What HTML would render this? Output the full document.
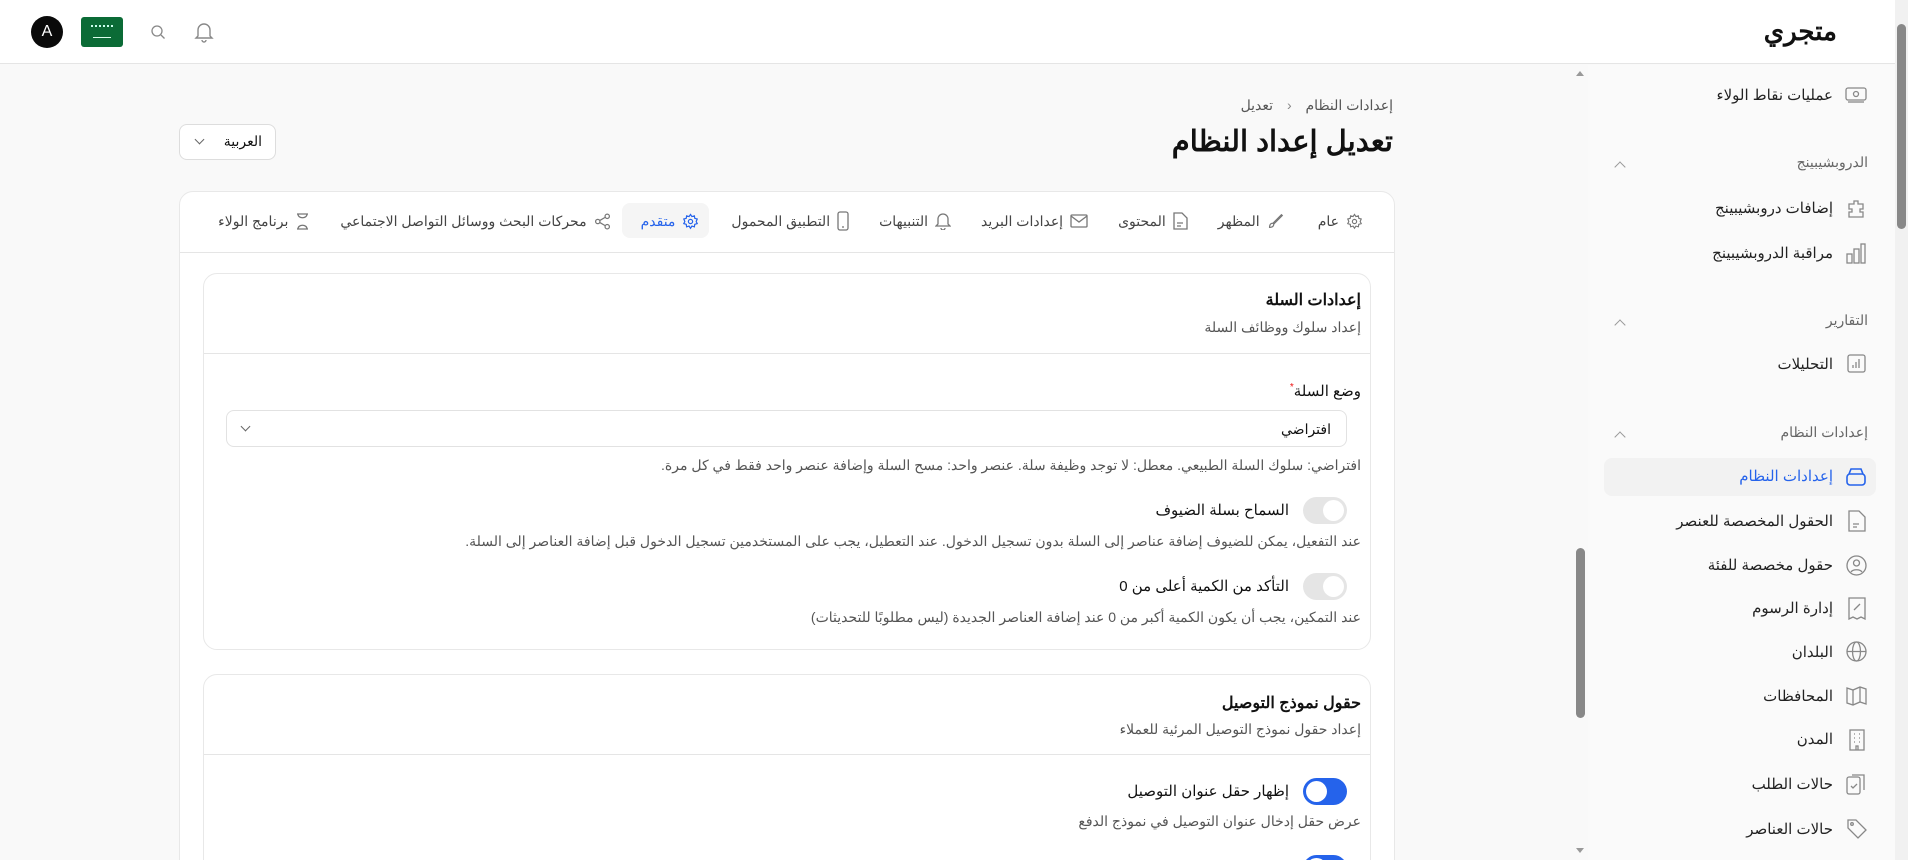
<!DOCTYPE html>
<html lang="ar"><head><meta charset="utf-8">
<style>
*{box-sizing:border-box;margin:0;padding:0}
html,body{width:1908px;height:860px;overflow:hidden}
body{background:#f9f9f9;font-family:"Liberation Sans","Noto Sans CJK SC",sans-serif;color:#111}
#wrap{position:relative;width:1908px;height:860px;overflow:hidden}
.abs{position:absolute}
.hdr{left:0;top:0;width:1895px;height:64px;background:#fff;border-bottom:1px solid #e5e5e5}
.rt{direction:rtl;text-align:right;white-space:nowrap}
.sb{left:1588px;top:65px;width:307px;height:795px;background:#fafafa}
.pscroll{left:1895px;top:0;width:13px;height:860px;background:#f1f1f1}
.mscroll{left:1573px;top:65px;width:15px;height:795px;background:#f9f9f9}
.si{right:42px;font-size:15px;color:#222}
.sh{right:40px;font-size:14px;color:#666}
.card{background:#fff;border:1px solid #e8e8e8;border-radius:14px}
.tog{width:44px;height:27px;border-radius:14px;background:#e5e5e5;position:absolute}
.tog::after{content:"";position:absolute;right:3px;top:3px;width:21px;height:21px;border-radius:50%;background:#fff}
.tog.on{background:#2563eb}
.tog.on::after{right:auto;left:3px}
.help{font-size:14px;color:#555}
.lbl{font-size:15px;color:#111}
.tab{font-size:14px;color:#444;display:flex;align-items:center;gap:7px}
</style></head><body><div id="wrap">
<div class="abs hdr"></div>
<div class="abs rt" style="right:71px;top:16px;font-size:26px;font-weight:bold">متجري</div>
<div class="abs" style="left:31px;top:16px;width:32px;height:32px;border-radius:50%;background:#0a0a0a;color:#fff;font-size:16px;text-align:center;line-height:32px">A</div>
<div class="abs" style="left:81px;top:17px;width:42px;height:30px;border-radius:3px;background:#0b6b36"><div class="abs" style="left:10px;top:8px;width:22px;height:4px;border-top:2px dotted #cfe"></div><div class="abs" style="left:12px;top:20px;width:18px;height:1px;background:#dfe"></div></div>
<svg class="abs" style="left:150px;top:24px" width="16" height="16" viewBox="0 0 16 16" fill="none" stroke="#888" stroke-width="1.3"><circle cx="7" cy="7" r="5"/><path d="M11 11l3.5 3.5"/></svg>
<svg class="abs" style="left:194px;top:21px" width="20" height="22" viewBox="0 0 20 22" fill="none" stroke="#888" stroke-width="1.4"><path d="M4 15V9a6 6 0 0112 0v6l2 2H2z"/><path d="M8 19a2 2 0 004 0"/></svg>

<div class="abs rt" style="right:515px;top:97px;font-size:14px;color:#555">إعدادات النظام <span style="margin:0 10px;color:#888">&lsaquo;</span> تعديل</div>
<div class="abs rt" style="right:515px;top:124px;font-size:29px;font-weight:bold">تعديل إعداد النظام</div>
<div class="abs" style="left:179px;top:124px;width:97px;height:36px;background:#fff;border:1px solid #ddd;border-radius:8px"><span class="abs rt" style="right:13px;top:8px;font-size:14px">العربية</span><div class="abs" style="left:16px;top:11px;width:7px;height:7px;border-right:1.5px solid #666;border-bottom:1.5px solid #666;transform:rotate(45deg)"></div></div>

<div class="abs card" style="left:179px;top:191px;width:1216px;height:700px"></div>
<div class="abs" style="left:180px;top:252px;width:1214px;height:1px;background:#e5e5e5"></div>
<div class="abs" style="left:622px;top:203px;width:87px;height:35px;border-radius:8px;background:#f5f5f5"></div>
<div class="abs" style="right:545px;top:211px;display:flex;direction:rtl;gap:0;white-space:nowrap">
<div class="tab" style="margin-left:34px"><svg width="17" height="17" viewBox="0 0 24 24" fill="none" stroke="#777" stroke-width="1.6"><circle cx="12" cy="12" r="3"/><path d="M12 2l2 3 3.5-1 .5 3.5 3.5 1-1.5 3.5 1.5 3-3.5 1-.5 3.5-3.5-1-2 3-2-3-3.5 1-.5-3.5-3.5-1 1.5-3-1.5-3.5 3.5-1 .5-3.5 3.5 1z"/></svg>عام</div>
<div class="tab" style="margin-left:30px"><svg width="17" height="17" viewBox="0 0 20 20" fill="none" stroke="#777" stroke-width="1.4"><path d="M17 2L7 12l1 1L18 3z"/><path d="M7 12c-3 0-4 2-4 5 3 0 5-1 5-4"/></svg>المظهر</div>
<div class="tab" style="margin-left:30px"><svg width="15" height="18" viewBox="0 0 15 18" fill="none" stroke="#777" stroke-width="1.3"><path d="M1 1h8l5 5v11H1z"/><path d="M4 11h6M4 14h4"/></svg>المحتوى</div>
<div class="tab" style="margin-left:30px"><svg width="18" height="14" viewBox="0 0 18 14" fill="none" stroke="#777" stroke-width="1.3"><rect x="1" y="1" width="16" height="12" rx="1"/><path d="M1 2l8 6 8-6"/></svg>إعدادات البريد</div>
<div class="tab" style="margin-left:30px"><svg width="16" height="18" viewBox="0 0 16 18" fill="none" stroke="#777" stroke-width="1.3"><path d="M3 12V7a5 5 0 0110 0v5l2 2H1z"/><path d="M6 16a2 2 0 004 0"/></svg>التنبيهات</div>
<div class="tab" style="margin-left:32px"><svg width="12" height="20" viewBox="0 0 12 20" fill="none" stroke="#777" stroke-width="1.3"><rect x="1" y="1" width="10" height="18" rx="2"/><path d="M5 16h2"/></svg>التطبيق المحمول</div>
<div class="tab" style="margin-left:30px;color:#2563eb"><svg width="17" height="17" viewBox="0 0 24 24" fill="none" stroke="#2563eb" stroke-width="1.7"><circle cx="12" cy="12" r="3"/><path d="M12 2l2 3 3.5-1 .5 3.5 3.5 1-1.5 3.5 1.5 3-3.5 1-.5 3.5-3.5-1-2 3-2-3-3.5 1-.5-3.5-3.5-1 1.5-3-1.5-3.5 3.5-1 .5-3.5 3.5 1z"/></svg>متقدم</div>
<div class="tab" style="margin-left:30px"><svg width="17" height="17" viewBox="0 0 18 18" fill="none" stroke="#777" stroke-width="1.3"><circle cx="14" cy="3.5" r="2.3"/><circle cx="4" cy="9" r="2.3"/><circle cx="14" cy="14.5" r="2.3"/><path d="M6 8l6-3.5M6 10l6 3.5"/></svg>محركات البحث ووسائل التواصل الاجتماعي</div>
<div class="tab"><svg width="15" height="17" viewBox="0 0 15 17" fill="none" stroke="#777" stroke-width="1.3"><path d="M2 1h11M2 16h11M3 1c0 5 9 5 9 0M3 16c0-5 9-5 9 0"/></svg>برنامج الولاء</div>
</div>

<div class="abs card" style="left:203px;top:273px;width:1168px;height:377px"></div>
<div class="abs" style="left:204px;top:353px;width:1166px;height:1px;background:#e5e5e5"></div>
<div class="abs rt" style="right:547px;top:290px;font-size:16px;font-weight:bold">إعدادات السلة</div>
<div class="abs rt help" style="right:547px;top:319px">إعداد سلوك ووظائف السلة</div>
<div class="abs rt lbl" style="right:547px;top:382px">وضع السلة<span style="color:#e11;font-size:10px;vertical-align:top">*</span></div>
<div class="abs" style="left:226px;top:410px;width:1121px;height:37px;background:#fff;border:1px solid #e2e2e2;border-radius:8px"><span class="abs rt" style="right:15px;top:10px;font-size:14px">افتراضي</span><div class="abs" style="left:15px;top:12px;width:7px;height:7px;border-right:1.3px solid #666;border-bottom:1.3px solid #666;transform:rotate(45deg)"></div></div>
<div class="abs rt help" style="right:547px;top:457px">افتراضي: سلوك السلة الطبيعي. معطل: لا توجد وظيفة سلة. عنصر واحد: مسح السلة وإضافة عنصر واحد فقط في كل مرة.</div>
<div class="tog" style="left:1303px;top:497px"></div>
<div class="abs rt lbl" style="right:619px;top:501px">السماح بسلة الضيوف</div>
<div class="abs rt help" style="right:547px;top:533px">عند التفعيل، يمكن للضيوف إضافة عناصر إلى السلة بدون تسجيل الدخول. عند التعطيل، يجب على المستخدمين تسجيل الدخول قبل إضافة العناصر إلى السلة.</div>
<div class="tog" style="left:1303px;top:573px"></div>
<div class="abs rt lbl" style="right:619px;top:577px">التأكد من الكمية أعلى من 0</div>
<div class="abs rt help" style="right:547px;top:609px">عند التمكين، يجب أن يكون الكمية أكبر من 0 عند إضافة العناصر الجديدة (ليس مطلوبًا للتحديثات)</div>

<div class="abs card" style="left:203px;top:674px;width:1168px;height:300px"></div>
<div class="abs" style="left:204px;top:754px;width:1166px;height:1px;background:#e5e5e5"></div>
<div class="abs rt" style="right:547px;top:693px;font-size:16px;font-weight:bold">حقول نموذج التوصيل</div>
<div class="abs rt help" style="right:547px;top:721px">إعداد حقول نموذج التوصيل المرئية للعملاء</div>
<div class="tog on" style="left:1303px;top:778px"></div>
<div class="abs rt lbl" style="right:619px;top:782px">إظهار حقل عنوان التوصيل</div>
<div class="abs rt help" style="right:547px;top:813px">عرض حقل إدخال عنوان التوصيل في نموذج الدفع</div>
<div class="tog on" style="left:1303px;top:855px"></div>

<div class="abs mscroll"><div class="abs" style="left:3px;top:6px;border:4px solid transparent;border-bottom:5px solid #999;border-top:none"></div><div class="abs" style="left:3px;top:483px;width:9px;height:170px;border-radius:5px;background:#888"></div><div class="abs" style="left:3px;top:783px;border:4px solid transparent;border-top:5px solid #999;border-bottom:none"></div></div>
<div class="abs sb"></div>
<div class="abs pscroll"><div class="abs" style="left:2px;top:24px;width:9px;height:205px;border-radius:5px;background:#888"></div></div>

<div class="abs rt si" style="top:86px;right:75px">عمليات نقاط الولاء</div>
<svg class="abs" style="left:1845px;top:86px" width="22" height="18" viewBox="0 0 22 18" fill="none" stroke="#888" stroke-width="1.3"><rect x="1" y="2" width="20" height="12" rx="2"/><circle cx="11" cy="8" r="2.5"/><path d="M3 16h16"/></svg>
<div class="abs rt sh" style="top:154px;right:40px">الدروبشيبينج</div>
<div class="abs" style="left:1616px;top:163px;width:8px;height:8px;border-left:1.3px solid #999;border-top:1.3px solid #999;transform:rotate(45deg)"></div>
<div class="abs rt si" style="top:199px;right:75px">إضافات دروبشيبينج</div>
<svg class="abs" style="left:1846px;top:199px" width="20" height="20" viewBox="0 0 20 20" fill="none" stroke="#888" stroke-width="1.3"><path d="M8 2h4v3h5v5h-3v3h3v5H3v-5h3v-3H3V5h5z"/></svg>
<div class="abs rt si" style="top:244px;right:75px">مراقبة الدروبشيبينج</div>
<svg class="abs" style="left:1846px;top:242px" width="20" height="22" viewBox="0 0 20 22" fill="none" stroke="#888" stroke-width="1.3"><rect x="1" y="12" width="5" height="9"/><rect x="8" y="7" width="5" height="14"/><rect x="15" y="2" width="4" height="19"/></svg>
<div class="abs rt sh" style="top:312px">التقارير</div>
<div class="abs" style="left:1616px;top:321px;width:8px;height:8px;border-left:1.3px solid #999;border-top:1.3px solid #999;transform:rotate(45deg)"></div>
<div class="abs rt si" style="top:355px;right:75px">التحليلات</div>
<svg class="abs" style="left:1847px;top:354px" width="19" height="19" viewBox="0 0 19 19" fill="none" stroke="#888" stroke-width="1.3"><rect x="1" y="1" width="17" height="17" rx="2"/><path d="M6 14v-3M9 14V8M12 14V5"/></svg>
<div class="abs rt sh" style="top:424px">إعدادات النظام</div>
<div class="abs" style="left:1616px;top:433px;width:8px;height:8px;border-left:1.3px solid #999;border-top:1.3px solid #999;transform:rotate(45deg)"></div>
<div class="abs" style="left:1604px;top:458px;width:272px;height:38px;border-radius:8px;background:#f2f2f2"></div>
<div class="abs rt si" style="top:467px;right:75px;color:#2563eb">إعدادات النظام</div>
<svg class="abs" style="left:1846px;top:466px" width="20" height="20" viewBox="0 0 20 20" fill="none" stroke="#2563eb" stroke-width="1.6"><rect x="1" y="8" width="18" height="11" rx="3"/><path d="M3 8l2-5h10l2 5"/></svg>
<div class="abs rt si" style="top:512px;right:75px">الحقول المخصصة للعنصر</div>
<svg class="abs" style="left:1848px;top:510px" width="18" height="22" viewBox="0 0 18 22" fill="none" stroke="#888" stroke-width="1.3"><path d="M1 1h10l6 6v14H1z"/><path d="M5 14h6M5 17h4"/></svg>
<div class="abs rt si" style="top:556px;right:75px">حقول مخصصة للفئة</div>
<svg class="abs" style="left:1846px;top:555px" width="21" height="21" viewBox="0 0 21 21" fill="none" stroke="#888" stroke-width="1.3"><circle cx="10.5" cy="10.5" r="9.5"/><circle cx="10.5" cy="8" r="3"/><path d="M5 17c2-3 9-3 11 0"/></svg>
<div class="abs rt si" style="top:599px;right:75px">إدارة الرسوم</div>
<svg class="abs" style="left:1848px;top:597px" width="18" height="23" viewBox="0 0 18 23" fill="none" stroke="#888" stroke-width="1.3"><path d="M1 1h16v21l-4-2-4 2-4-2-4 2z"/><path d="M6 13l6-6"/></svg>
<div class="abs rt si" style="top:643px;right:75px">البلدان</div>
<svg class="abs" style="left:1846px;top:641px" width="21" height="21" viewBox="0 0 21 21" fill="none" stroke="#888" stroke-width="1.3"><circle cx="10.5" cy="10.5" r="9.5"/><ellipse cx="10.5" cy="10.5" rx="4" ry="9.5"/><path d="M1 10.5h19"/></svg>
<div class="abs rt si" style="top:687px;right:75px">المحافظات</div>
<svg class="abs" style="left:1846px;top:685px" width="21" height="21" viewBox="0 0 21 21" fill="none" stroke="#888" stroke-width="1.3"><path d="M1 3l6 2 7-3 6 2v15l-6-2-7 3-6-2z"/><path d="M7 5v15M14 2v15"/></svg>
<div class="abs rt si" style="top:730px;right:75px">المدن</div>
<svg class="abs" style="left:1848px;top:729px" width="18" height="22" viewBox="0 0 18 22" fill="none" stroke="#888" stroke-width="1.3"><rect x="2" y="1" width="14" height="20"/><path d="M6 5h1M11 5h1M6 9h1M11 9h1M6 13h1M11 13h1M8 21v-4h2v4"/></svg>
<div class="abs rt si" style="top:775px;right:75px">حالات الطلب</div>
<svg class="abs" style="left:1846px;top:772px" width="20" height="23" viewBox="0 0 20 23" fill="none" stroke="#888" stroke-width="1.3"><rect x="1" y="5" width="13" height="17" rx="2"/><path d="M6 3h12v15"/><path d="M5 14l2 2 4-4"/></svg>
<div class="abs rt si" style="top:820px;right:75px">حالات العناصر</div>
<svg class="abs" style="left:1846px;top:818px" width="22" height="22" viewBox="0 0 22 22" fill="none" stroke="#888" stroke-width="1.3"><path d="M2 2h8l10 10-8 8L2 10z"/><circle cx="6" cy="6" r="1.3"/></svg>
</div></body></html>
